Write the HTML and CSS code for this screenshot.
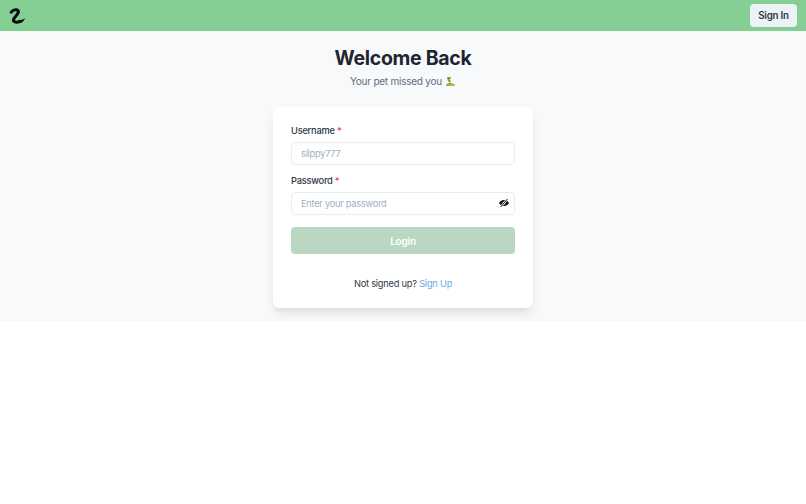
FILE: index.html
```html
<!DOCTYPE html>
<html lang="en">
<head>
    <meta charset="UTF-8">
    <meta name="viewport" content="width=device-width, initial-scale=1.0">
    <title>Login</title>
    <link rel="stylesheet" href="styles.css">
</head>
<body>
    <header class="navbar">
        <svg class="logo" viewBox="0 0 17 18" width="17" height="18">
            <path d="M2.2 5.2 C4 2.4 8.8 1.6 9.4 4.4 C9.8 7.4 4.6 10 4.4 13 C4.4 15.4 8 15.6 11 14.4" fill="none" stroke="#0c0c0c" stroke-width="3" stroke-linecap="round"/>
            <path d="M10 13 C12 13.2 14.4 12.4 16.4 11.2 C15 13.8 12.6 16 10.4 16.2 Z" fill="#0c0c0c"/>
        </svg>
        <button class="signin-btn">Sign In</button>
    </header>
    <main class="page">
        <h1 class="title">Welcome Back</h1>
        <p class="subtitle">Your pet missed you
            <svg class="snake" viewBox="0 0 12 12" width="11" height="11">
                <path d="M2.5 1 L6 1 L6.4 3 L4.8 3.6 L6.6 6.4 L5 7.4 L2.6 4 Z" fill="#7d9a2c"/>
                <path d="M1 10 C2 8 4 7.4 6 7.6 C8 8 10.5 8.4 11.5 10.4 L1.5 11 Z" fill="#8aa632"/>
                <path d="M2 9.6 C4 9 8 9 10 10" stroke="#e3b23c" stroke-width="0.8" fill="none"/>
            </svg>
        </p>
        <form class="card">
            <div class="field">
                <label class="field-label" for="username">Username <span class="req">*</span></label>
                <input class="text-input" id="username" type="text" placeholder="slippy777">
            </div>
            <div class="field">
                <label class="field-label" for="password">Password <span class="req">*</span></label>
                <div class="input-wrap">
                    <input class="text-input" id="password" type="password" placeholder="Enter your password">
                    <svg class="eye" viewBox="0 0 16 16" width="10" height="10">
                        <path d="M8 3.2 C12 3.2 14.8 6 16 8 C14.8 10 12 12.8 8 12.8 C4 12.8 1.2 10 0 8 C1.2 6 4 3.2 8 3.2 Z" fill="#111"/>
                        <circle cx="8" cy="8" r="2.2" fill="#fff"/>
                        <path d="M2.5 14.5 L13.5 1.5" stroke="#fff" stroke-width="3.4"/>
                        <path d="M2.5 14.5 L13.5 1.5" stroke="#111" stroke-width="1.6"/>
                    </svg>
                </div>
            </div>
            <button class="login-btn" type="button">Login</button>
            <p class="signup">Not signed up? <a href="#">Sign Up</a></p>
        </form>
    </main>
</body>
</html>
```

FILE: styles.css
```css
body {
    margin: 0;
    font-family: Inter, "Liberation Sans", sans-serif;
    background: #fff;
    color: #1a202c;
}

.navbar {
    height: 31px;
    background-color: #86cf94;
    display: flex;
    justify-content: space-between;
    align-items: center;
    padding: 0 9px;
}

.logo {
    display: block;
}

.signin-btn {
    width: 47px;
    height: 23px;
    padding: 0;
    border: none;
    border-radius: 4px;
    background-color: #edf2f7;
    color: #2d3748;
    font: 600 9.75px Inter, sans-serif;
    letter-spacing: -0.2px;
}

.page {
    height: 290px;
    box-sizing: border-box;
    background-color: #f8f9fb;
    padding-top: 15px;
    display: flex;
    flex-direction: column;
    align-items: center;
}

.title {
    margin: 0;
    font-size: 19.5px;
    line-height: 24px;
    font-weight: 700;
    letter-spacing: -0.3px;
    color: #1f2530;
}

.subtitle {
    margin: 3px 0 0;
    font-size: 10px;
    line-height: 16px;
    color: #626d7e;
    letter-spacing: -0.24px;
    display: flex;
    align-items: center;
    gap: 3px;
}

.card {
    width: 260px;
    height: 201px;
    box-sizing: border-box;
    margin-top: 18px;
    padding: 18px;
    background: #fff;
    border-radius: 6px;
    box-shadow: 0 7px 11px -2px rgba(0, 0, 0, 0.1), 0 3px 5px -2px rgba(0, 0, 0, 0.05);
}

.field {
    margin-bottom: 10px;
}

.field-label {
    display: block;
    font-size: 9.25px;
    line-height: 12px;
    font-weight: 500;
    letter-spacing: -0.22px;
    margin-bottom: 5px;
    color: #2d3748;
}

.req {
    color: #e53e3e;
}

.input-wrap {
    position: relative;
}

.text-input {
    display: block;
    width: 100%;
    height: 23px;
    box-sizing: border-box;
    padding: 0 9px;
    border: 1px solid #e9edf2;
    border-radius: 4px;
    background: #fff;
    font: 9.25px Inter, sans-serif;
    letter-spacing: -0.25px;
}

.text-input::placeholder {
    color: #a0aec0;
    opacity: 1;
}

.eye {
    position: absolute;
    right: 6px;
    top: 6px;
}

.login-btn {
    display: block;
    width: 100%;
    height: 27px;
    margin-top: 12px;
    border: none;
    border-radius: 4px;
    background-color: #b9d7c1;
    color: #fff;
    font: 600 10px Inter, sans-serif;
    letter-spacing: -0.2px;
}

.signup {
    margin: 23px 0 0;
    text-align: center;
    font-size: 9.25px;
    line-height: 13px;
    letter-spacing: -0.22px;
    color: #2d3748;
}

.signup a {
    color: #6aa5e0;
    text-decoration: none;
}
```
